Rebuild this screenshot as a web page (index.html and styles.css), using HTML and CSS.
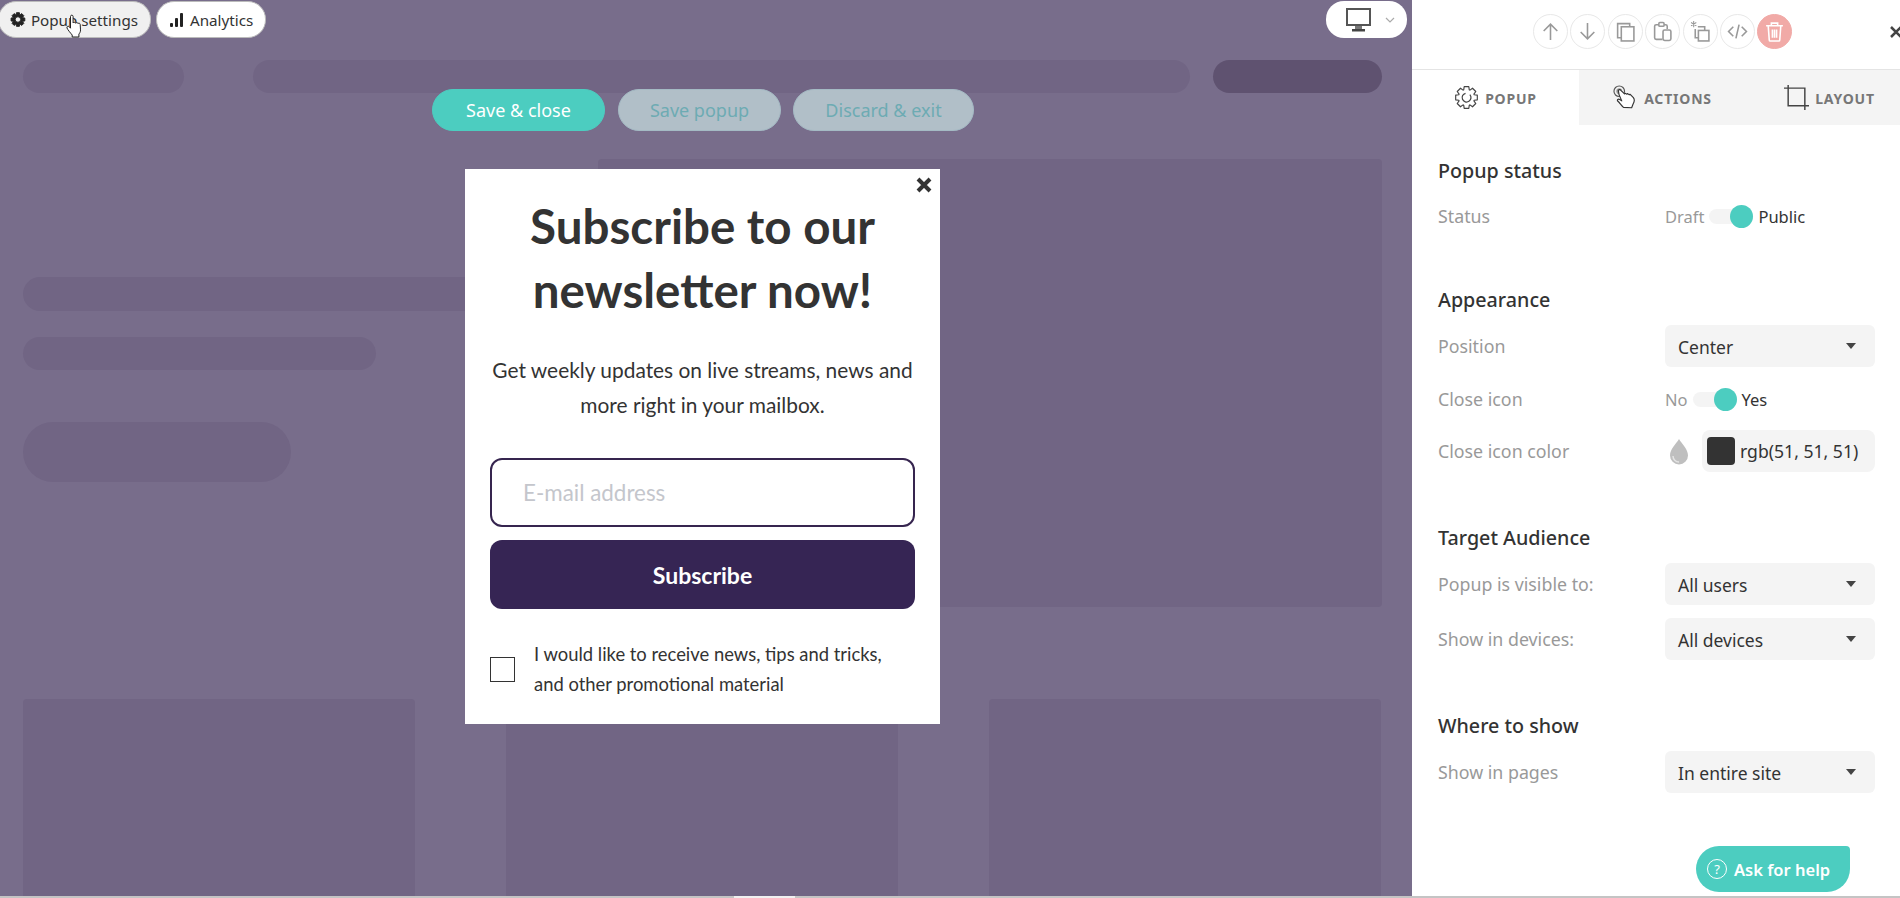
FILE: index.html
```html
<!DOCTYPE html>
<html>
<head>
<title>Popup editor</title>
<link rel="stylesheet" href="styles.css">
</head>
<body>
<div class="app">
  <div class="canvas">
    <!-- faded page behind the popup -->
    <div class="sk-nav">
      <div class="sk sk-logo"></div>
      <div class="sk sk-menu"></div>
      <div class="sk sk-login"></div>
    </div>
    <div class="sk-hero">
      <div class="sk-text">
        <div class="sk sk-line1"></div>
        <div class="sk sk-line2"></div>
        <div class="sk sk-cta"></div>
      </div>
      <div class="sk sk-img"></div>
    </div>
    <div class="sk-cards">
      <div class="sk sk-card"></div>
      <div class="sk sk-card"></div>
      <div class="sk sk-card"></div>
    </div>

    <div class="tools">
      <button class="pill pill-on">
        <svg class="pill-gear" viewBox="-13 -13 26 26"><path fill-rule="evenodd" stroke="#222" stroke-width="1.5" stroke-linejoin="round" fill="#222" d="M-2.9-8L-2.4-11.25L2.4-11.25L2.9-8L3.6-7.7L6.27-9.65L9.65-6.27L7.7-3.6L8-2.9L11.25-2.4L11.25 2.4L8 2.9L7.7 3.6L9.65 6.27L6.27 9.65L3.6 7.7L2.9 8L2.4 11.25L-2.4 11.25L-2.9 8L-3.6 7.7L-6.27 9.65L-9.65 6.27L-7.7 3.6L-8 2.9L-11.25 2.4L-11.25-2.4L-8-2.9L-7.7-3.6L-9.65-6.27L-6.27-9.65L-3.6-7.7ZM0-4.5A4.5 4.5 0 1 0 0 4.5A4.5 4.5 0 1 0 0-4.5Z"/></svg>
        Popup settings
      </button>
      <button class="pill">
        <svg class="pill-bars" viewBox="0 0 14 14"><rect x="0" y="10" width="3" height="4" rx="1"/><rect x="5" y="5" width="3" height="9" rx="1"/><rect x="10" y="0" width="3" height="14" rx="1"/></svg>
        Analytics
      </button>
    </div>

    <div class="device">
      <svg class="device-screen" viewBox="0 0 25 24"><rect x="1" y="1" width="23" height="16" fill="#fff" stroke="#555" stroke-width="2"/><path d="M9 18h7v3H9z" fill="#777"/><path d="M6 21h13v2.500H6z" fill="#444"/></svg>
      <svg class="device-chev" viewBox="0 0 10 6"><path d="M1 1l4 4 4-4" fill="none" stroke="#aaa" stroke-width="1.200"/></svg>
    </div>

    <div class="actions">
      <button class="act act-save">Save &amp; close</button>
      <button class="act act-off act-popup">Save popup</button>
      <button class="act act-off act-exit">Discard &amp; exit</button>
    </div>

    <div class="popup">
      <svg class="popup-x" viewBox="0 0 16 16"><path d="M2 2l12 12M14 2L2 14" stroke="#333" stroke-width="4"/></svg>
      <h1>Subscribe to our newsletter now!</h1>
      <p class="popup-text">Get weekly updates on live streams, news and more right in your mailbox.</p>
      <div class="popup-input">E-mail address</div>
      <button class="popup-btn">Subscribe</button>
      <div class="consent">
        <span class="consent-box"></span>
        <span>I would like to receive news, tips and tricks, and other promotional material</span>
      </div>
    </div>

    <svg class="cursor" viewBox="0 0 18 24"><path d="M4.500 2.500c0-1.800 2.600-1.800 2.600 0V9c.4-1 2.300-1 2.500.2.400-.9 2.200-.9 2.400.4.500-.7 2.100-.5 2.200.8l.3 5.500c.1 2-.8 3-1.600 4.200V23H6.200v-2C4.500 19 1.500 15.500 1 14c-.5-1.500 1-2.400 2-1.400l1.500 1.600z" fill="#fff" stroke="#222" stroke-width="1"/></svg>
  </div>

  <div class="side">
    <div class="side-top">
      <span class="tb"><svg viewBox="0 0 20 20"><path d="M10 18V3M3.500 9.500L10 3l6.500 6.500"/></svg></span>
      <span class="tb"><svg viewBox="0 0 20 20"><path d="M10 2v15M3.500 10.500L10 17l6.500-6.500"/></svg></span>
      <span class="tb"><svg viewBox="0 0 20 20"><path d="M6 16H2.500V2.500H14V5.500"/><rect x="6" y="5.500" width="12" height="13.500"/></svg></span>
      <span class="tb"><svg viewBox="0 0 20 20"><path d="M10 17.500H4a1.500 1.500 0 0 1-1.500-1.500V5A1.500 1.500 0 0 1 4 3.500h2.500M11.500 3.500H13A1.500 1.500 0 0 1 14.500 5V7.500"/><rect x="6.500" y="1.500" width="5" height="3.500" rx="1"/><rect x="10.500" y="8.500" width="7.500" height="10" rx="1.500"/></svg></span>
      <span class="tb"><svg viewBox="0 0 20 20"><path d="M3.500 0v6M1 1.500l5 3M1 4.500l5-3" stroke-width="1"/><path d="M7.500 5.500H14V9"/><path d="M5 7.500V16h3"/><rect x="8" y="9" width="10" height="10"/></svg></span>
      <span class="tb"><svg viewBox="0 0 20 20"><path d="M6 5.500L1.500 10 6 14.500M14 5.500l4.500 4.500-4.500 4.500M11.500 3.500l-3 13"/></svg></span>
      <span class="tb tb-del"><svg viewBox="0 0 20 20"><path d="M2 4.500h16M7 4.500V2h6v2.500M4 4.500l1 13.500a1 1 0 0 0 1 1h8a1 1 0 0 0 1-1l1-13.500M8 8v8M10 8v8M12 8v8"/></svg></span>
      <svg class="side-x" viewBox="0 0 12 12"><path d="M1 1l10 10M11 1L1 11" stroke="#444" stroke-width="2.500"/></svg>
    </div>

    <div class="tabs">
      <div class="tab tab-on">
        <svg viewBox="-13 -13 26 26"><polygon fill="none" stroke="#444" stroke-width="1.200" stroke-linejoin="round" points="-2.900,-8 -2.400,-11.250 2.400,-11.250 2.900,-8 3.600,-7.700 6.270,-9.650 9.650,-6.270 7.700,-3.600 8,-2.900 11.250,-2.400 11.250,2.400 8,2.900 7.700,3.600 9.650,6.270 6.270,9.650 3.600,7.700 2.900,8 2.400,11.250 -2.400,11.250 -2.900,8 -3.600,7.700 -6.270,9.650 -9.650,6.270 -7.700,3.600 -8,2.900 -11.250,2.400 -11.250,-2.400 -8,-2.900 -7.700,-3.600 -9.650,-6.270 -6.270,-9.650 -3.600,-7.700"/><path d="M3.500-3A4.600 4.600 0 1 1-1-4.400" fill="none" stroke="#444" stroke-width="1.300"/></svg>
        POPUP
      </div>
      <div class="tab">
        <svg viewBox="0 0 26 26"><circle cx="6.500" cy="6.500" r="5.500" fill="none" stroke="#555" stroke-width="1.200"/><circle cx="6.500" cy="6.500" r="3" fill="#999"/><path d="M5.500 5.500c1-1 2-.8 2.700 0l3.800 3.800 1-.6 1.100.8 1.200-.5 1.300 1 1.300-.3 3.300 3.500c1 1.300 1.200 4-.3 6.500l-1.500 4-8.500-.5c-2-1.800-4-4.800-6-6.500-1-1.200.5-2.500 2-1.600l2.200 1.400-2.800-6.500z" fill="#fff" stroke="#333" stroke-width="1.200" stroke-linejoin="round"/></svg>
        ACTIONS
      </div>
      <div class="tab">
        <svg viewBox="0 0 24 24"><path d="M0 3h20v21M4 0v20h20" fill="none" stroke="#444" stroke-width="1.400"/></svg>
        LAYOUT
      </div>
    </div>

    <div class="side-body">
      <section class="section section-status">
        <h2>Popup status</h2>
        <div class="rows">
          <div class="row row-status">
            <span class="lbl">Status</span>
            <div class="toggle"><span class="off">Draft</span><span class="switch"><i></i></span><span>Public</span></div>
          </div>
        </div>
      </section>

      <section class="section">
        <h2>Appearance</h2>
        <div class="rows">
          <div class="row">
            <span class="lbl">Position</span>
            <div class="sel">Center</div>
          </div>
          <div class="row row-close">
            <span class="lbl">Close icon</span>
            <div class="toggle"><span class="off">No</span><span class="switch"><i></i></span><span>Yes</span></div>
          </div>
          <div class="row row-color">
            <span class="lbl">Close icon color</span>
            <div class="color">
              <svg class="drop" viewBox="0 0 20 27"><path d="M10 1C7 6 1 11 1 17.500a9 9 0 0 0 18 0C19 11 13 6 10 1z" fill="#bfbfbf"/><path d="M4 18a6 6 0 0 0 6 6" fill="none" stroke="#e4e4e4" stroke-width="1.500"/></svg>
              <div class="color-val"><span class="swatch"></span>rgb(51, 51, 51)</div>
            </div>
          </div>
        </div>
      </section>

      <section class="section">
        <h2>Target Audience</h2>
        <div class="rows">
          <div class="row">
            <span class="lbl">Popup is visible to:</span>
            <div class="sel">All users</div>
          </div>
          <div class="row">
            <span class="lbl">Show in devices:</span>
            <div class="sel">All devices</div>
          </div>
        </div>
      </section>

      <section class="section">
        <h2>Where to show</h2>
        <div class="rows">
          <div class="row">
            <span class="lbl">Show in pages</span>
            <div class="sel">In entire site</div>
          </div>
        </div>
      </section>
    </div>

    <div class="help"><span class="help-q">?</span>Ask for help</div>
  </div>
</div>
<div class="scrollbar"><div class="scrollbar-thumb"></div></div>
</body>
</html>
```

FILE: styles.css
```css
* {
  box-sizing: border-box;
}

html, body {
  margin: 0;
  height: 100%;
  overflow: hidden;
}

body {
  font-family: "Noto Sans", "Open Sans", sans-serif;
  color: #333;
  background: #fff;
}

button {
  font-family: inherit;
  cursor: pointer;
}

.app {
  display: flex;
  height: 896px;
}

/* canvas */
.canvas {
  position: relative;
  width: 1412px;
  flex: none;
  padding: 60px 30px 0 23px;
  overflow: hidden;
  background: #786d8b;
}

.sk {
  background: #716584;
  border-radius: 17px;
}

.sk-nav {
  display: flex;
  gap: 23px;
  height: 33px;
}

.sk-logo {
  width: 161px;
  margin-right: 46px;
}

.sk-menu {
  flex: 1;
}

.sk-login {
  width: 169px;
  background: #5f5270;
}

.sk-hero {
  display: flex;
  margin-top: 66px;
  height: 448px;
}

.sk-text {
  width: 575px;
  padding-top: 118px;
}

.sk-line1 {
  width: 500px;
  height: 34px;
}

.sk-line2 {
  width: 353px;
  height: 33px;
  margin-top: 26px;
}

.sk-cta {
  width: 268px;
  height: 60px;
  margin-top: 52px;
  border-radius: 30px;
}

.sk-img {
  flex: 1;
  border-radius: 4px;
}

.sk-cards {
  display: grid;
  grid-template-columns: repeat(3, 392px);
  gap: 91px;
  margin-top: 92px;
}

.sk-card {
  height: 220px;
  border-radius: 4px;
}

/* floating tools */
.tools {
  position: absolute;
  top: 1px;
  left: -2px;
  display: flex;
  gap: 5px;
}

.pill {
  display: flex;
  align-items: center;
  height: 37px;
  padding: 0 12px;
  border: 1px solid #bbb;
  border-radius: 18px;
  background: #fff;
  color: #333;
  font-size: 15.200px;
  white-space: nowrap;
}

.pill-on {
  width: 153px;
  padding-left: 11px;
  background: #f0f0f0;
}

.pill-gear {
  width: 17px;
  height: 17px;
  margin-right: 5px;
}

.pill-bars {
  width: 14px;
  height: 14px;
  margin-right: 6px;
  margin-left: 1px;
  fill: #222;
}

.device {
  position: absolute;
  top: 1px;
  left: 1326px;
  display: flex;
  align-items: center;
  width: 81px;
  height: 37px;
  padding-left: 20px;
  border-radius: 18px;
  background: #fff;
}

.device-screen {
  width: 25px;
  height: 24px;
}

.device-chev {
  width: 10px;
  height: 6px;
  margin-left: 14px;
}

.actions {
  position: absolute;
  top: 89px;
  left: 432px;
  display: flex;
  gap: 13px;
}

.act {
  height: 42px;
  border: 1px solid #4ccdc0;
  border-radius: 21px;
  background: #4ccdc0;
  color: #fff;
  font-size: 18px;
  padding: 0;
}

.act-save {
  width: 173px;
}

.act-off {
  background: #b1bfc8;
  border-color: #a4bac4;
  color: #6dabb3;
}

.act-popup {
  width: 163px;
}

.act-exit {
  width: 181px;
  margin-left: -1px;
}

/* popup */
.popup {
  position: absolute;
  top: 169px;
  left: 465px;
  width: 475px;
  height: 555px;
  padding: 25px 25px 25px;
  background: #fff;
  font-family: Lato, sans-serif;
  color: #333;
}

.popup-x {
  position: absolute;
  top: 8px;
  right: 8px;
  width: 16px;
  height: 16px;
}

.popup h1 {
  margin: 0;
  padding: 0 30px;
  font-size: 47.500px;
  font-weight: 700;
  line-height: 63.500px;
  text-align: center;
}

.popup-text {
  margin: 31px 0 36px;
  font-size: 20.900px;
  line-height: 35px;
  text-align: center;
}

.popup-input {
  height: 69px;
  padding-left: 31px;
  border: 2px solid #36254f;
  border-radius: 12px;
  color: #c4c6cc;
  font-size: 22.400px;
  line-height: 65px;
}

.popup-btn {
  display: block;
  width: 100%;
  height: 69px;
  margin-top: 13px;
  border: 0;
  border-radius: 12px;
  background: #362554;
  color: #fff;
  font-family: Lato, sans-serif;
  font-size: 23px;
  font-weight: 700;
}

.consent {
  display: flex;
  align-items: center;
  gap: 19px;
  margin-top: 30px;
  font-size: 18.400px;
  line-height: 30px;
}

.consent-box {
  flex: none;
  width: 25px;
  height: 25px;
  border: 1px solid #333;
}

.cursor {
  position: absolute;
  top: 14px;
  left: 66px;
  width: 18px;
  height: 24px;
}

/* sidebar */
.side {
  position: relative;
  flex: 1;
  overflow: hidden;
}

.side-top {
  position: relative;
  display: flex;
  gap: 2.400px;
  height: 70px;
  padding: 14px 0 0 121px;
  border-bottom: 1px solid #e4e4e4;
}

.tb {
  display: flex;
  align-items: center;
  justify-content: center;
  width: 35px;
  height: 35px;
  border: 1px solid #e8e8e8;
  border-radius: 50%;
}

.tb svg {
  width: 21px;
  height: 21px;
  fill: none;
  stroke: #999;
  stroke-width: 1.500;
}

.tb-del {
  border-color: #f1aaa7;
  background: #f1aaa7;
}

.tb-del svg {
  stroke: #fff;
}

.side-x {
  position: absolute;
  top: 26px;
  left: 478px;
  width: 12px;
  height: 12px;
}

.tabs {
  display: flex;
  height: 55px;
  background: #f4f4f4;
}

.tab {
  display: flex;
  align-items: center;
  justify-content: center;
  gap: 6px;
  flex: none;
  width: 167px;
  padding-top: 2px;
  color: #777;
  font-size: 14px;
  font-weight: 700;
  letter-spacing: .8px;
}

.tab svg {
  width: 25px;
  height: 25px;
  flex: none;
  margin-top: -2px;
}

.tab-on {
  background: #fff;
}

.side-body {
  padding: 33px 25px 0 26px;
}

.section {
  margin-bottom: 53px;
}

.section-status {
  margin-bottom: 51px;
}

h2 {
  margin: 0 0 12px;
  font-size: 19.700px;
  font-weight: 500;
  line-height: 26px;
  color: #333;
}

.rows {
  display: grid;
  gap: 13px;
}

.row {
  display: flex;
  align-items: center;
  justify-content: space-between;
  height: 42px;
  font-size: 17.800px;
}

.row-status {
  height: 40px;
}

.row-close {
  height: 38px;
  margin-bottom: 2px;
}

.row-color {
  margin-top: -3px;
}

.lbl {
  color: #999;
}

.sel {
  position: relative;
  width: 210px;
  height: 42px;
  padding-left: 13px;
  border-radius: 6px;
  background: #f4f4f4;
  font-size: 17.500px;
  line-height: 44px;
}

.sel::after {
  content: "";
  position: absolute;
  top: 18px;
  right: 19px;
  border-top: 6px solid #444;
  border-left: 5px solid transparent;
  border-right: 5px solid transparent;
}

.toggle {
  display: flex;
  align-items: center;
  width: 210px;
  gap: 5px;
  font-size: 16.500px;
}

.off {
  color: #999;
}

.switch {
  position: relative;
  width: 44px;
  height: 15px;
  border-radius: 8px;
  background: #f4f4f4;
}

.switch i {
  position: absolute;
  top: -4px;
  right: 0;
  width: 23px;
  height: 23px;
  border-radius: 50%;
  background: #4ccdc0;
}

.color {
  display: flex;
  align-items: center;
  width: 210px;
}

.drop {
  width: 20px;
  height: 27px;
  margin-left: 4px;
  flex: none;
}

.color-val {
  display: flex;
  align-items: center;
  gap: 5px;
  width: 173px;
  height: 42px;
  margin-left: 13px;
  padding-left: 5px;
  border-radius: 8px;
  background: #f4f4f4;
  font-size: 17.600px;
  white-space: nowrap;
}

.swatch {
  width: 28px;
  height: 28px;
  flex: none;
  border-radius: 4px;
  background: #333;
}

.help {
  position: absolute;
  top: 846px;
  left: 284px;
  display: flex;
  align-items: center;
  width: 154px;
  height: 46px;
  padding-left: 11px;
  gap: 7px;
  border-radius: 23px 4px 23px 23px;
  background: #4ccdc0;
  color: #fff;
  font-size: 16.500px;
  font-weight: 600;
}

.help-q {
  display: flex;
  align-items: center;
  justify-content: center;
  width: 20px;
  height: 20px;
  border: 1.500px solid #fff;
  border-radius: 50%;
  font-size: 13px;
  font-weight: 400;
}

.scrollbar {
  height: 2px;
  background: #c4c4c4;
}

.scrollbar-thumb {
  width: 61px;
  height: 2px;
  margin-left: 734px;
  background: #f0f0f0;
}
```
